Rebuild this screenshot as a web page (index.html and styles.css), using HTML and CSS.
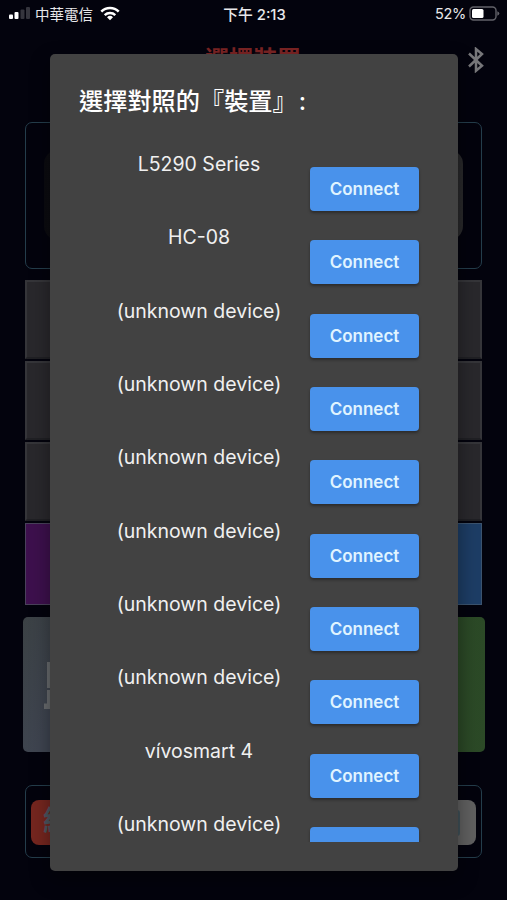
FILE: index.html
```html
<!DOCTYPE html>
<html lang="zh-Hant">

<head>
    <meta charset="UTF-8">
    <meta name="viewport" content="width=device-width, initial-scale=1.0">
    <title>選擇裝置</title>
    <link rel="stylesheet" href="styles.css">
</head>

<body>
    <!-- Status bar -->
    <div class="status-bar">
        <div class="carrier">
            <svg class="signal" width="22" height="14" viewBox="0 0 22 14">
                <rect x="0" y="8.5" width="4" height="4.5" rx="1" fill="#fff"/>
                <rect x="5.5" y="6" width="4" height="7" rx="1" fill="#fff"/>
                <rect x="11.5" y="3.5" width="4" height="9.5" rx="1" fill="#35353d"/>
                <rect x="17" y="1" width="4" height="12" rx="1" fill="#35353d"/>
            </svg>
            <span class="carrier-name">中華電信</span>
            <svg class="wifi" width="20" height="15" viewBox="0 0 20 15">
                <path d="M1.3 5.6a12.4 12.4 0 0 1 17.4 0" fill="none" stroke="#fff" stroke-width="2.6"/>
                <path d="M4.7 9.2a7.6 7.6 0 0 1 10.6 0" fill="none" stroke="#fff" stroke-width="2.4"/>
                <path d="M10 14.3l-3-3a4.3 4.3 0 0 1 6 0z" fill="#fff"/>
            </svg>
        </div>
        <div class="clock">下午 2:13</div>
        <div class="battery">
            <span>52%</span>
            <svg width="31" height="15" viewBox="0 0 31 15">
                <rect x="1" y="1" width="26" height="13" rx="3.5" fill="none" stroke="#63636a" stroke-width="1.4"/>
                <rect x="3" y="3" width="11.5" height="9" rx="1.5" fill="#fff"/>
                <path d="M28.3 5.2q2 .8 2 2.3t-2 2.3z" fill="#63636a"/>
            </svg>
        </div>
    </div>

    <!-- Page under the dialog -->
    <div class="page">
        <div class="header">
            <h1>選擇裝置</h1>
            <svg class="bluetooth" width="18" height="26" viewBox="0 0 18 26">
                <path d="M2 6.5l13 12.3-6 5V2l6 5L2 19.5" fill="none" stroke="#77777a" stroke-width="2.5"/>
            </svg>
        </div>
        <div class="card display-card">
            <div class="display"></div>
        </div>
        <div class="grid">
            <div class="grid-row"></div>
            <div class="grid-row"></div>
            <div class="grid-row"></div>
            <div class="grid-row color-row">
                <div class="purple"></div>
                <div class="blue"></div>
            </div>
        </div>
        <div class="big-buttons">
            <div class="gray-button">
                <svg width="10" height="48" viewBox="0 0 10 48">
                    <path d="M4.5 1v26M4.5 29v17.5H1.5v-4" fill="none" stroke="#696c6f" stroke-width="3"/>
                </svg>
            </div>
            <div class="green-button"></div>
        </div>
        <div class="card footer-card">
            <div class="red-button">結束</div>
            <div class="white-button"><span></span></div>
        </div>
    </div>

    <!-- Device dialog -->
    <div class="dialog">
        <h2>選擇對照的『裝置』<span>:</span></h2>
        <div class="device-list">
            <div class="device"><span>L5290 Series</span><button>Connect</button></div>
            <div class="device"><span>HC-08</span><button>Connect</button></div>
            <div class="device"><span>(unknown device)</span><button>Connect</button></div>
            <div class="device"><span>(unknown device)</span><button>Connect</button></div>
            <div class="device"><span>(unknown device)</span><button>Connect</button></div>
            <div class="device"><span>(unknown device)</span><button>Connect</button></div>
            <div class="device"><span>(unknown device)</span><button>Connect</button></div>
            <div class="device"><span>(unknown device)</span><button>Connect</button></div>
            <div class="device"><span>vívosmart 4</span><button>Connect</button></div>
            <div class="device"><span>(unknown device)</span><button></button></div>
        </div>
    </div>
</body>

</html>
```
FILE: styles.css
```css
* {
    box-sizing: border-box;
}

body {
    margin: 0;
    width: 507px;
    height: 900px;
    overflow: hidden;
    position: relative;
    background-color: #03030d;
    color: #fff;
    font-family: Inter, "Noto Sans CJK TC", sans-serif;
}

.status-bar {
    display: grid;
    grid-template-columns: 1fr auto 1fr;
    align-items: center;
    height: 28px;
    padding: 0 7px 2px 9px;
    font-size: 14.5px;
    color: #e8e8ea;
}

.carrier,
.battery {
    display: flex;
    align-items: center;
}

.carrier-name {
    margin: 0 7px 0 4px;
}

.clock {
    font-weight: 500;
    font-size: 14.8px;
}

.battery {
    justify-content: flex-end;
    gap: 3px;
}

.battery span {
    letter-spacing: -0.3px;
}

.page {
    padding: 0 25px;
}

.header {
    display: flex;
    height: 94px;
    padding: 15px 0 0 180px;
}

.header h1 {
    width: 97px;
    margin: 0;
    font-size: 24px;
    line-height: 34px;
    white-space: nowrap;
    color: #7c2424;
}

.bluetooth {
    flex: none;
    margin: 4px 0 0 166px;
}

.card {
    border: 1.5px solid #243d4b;
    border-radius: 7px;
}

.display-card {
    height: 147px;
    padding: 27px 18px;
}

.display {
    height: 90px;
    border-radius: 14px;
    background: linear-gradient(90deg, #0b0b10, #29292b);
}

.grid {
    margin-top: 11px;
}

.grid-row {
    height: 79px;
    margin-bottom: 2px;
    background-color: #29282c;
    border: 2px solid #353539;
    border-bottom-color: #202024;
}

.color-row {
    display: flex;
    height: 82px;
    margin-bottom: 0;
    border: none;
}

.purple,
.blue {
    flex: 1;
    border: 1px solid #49415a;
    background-color: #3d104d;
}

.blue {
    border-color: #3b536e;
    background-color: #1d3d65;
}

.big-buttons {
    display: flex;
    height: 135px;
    margin: 12px -3px 33px -2px;
}

.gray-button {
    flex: 1;
    padding: 44px 0 0 21px;
    border-radius: 5px;
    background: linear-gradient(110deg, #3b4144, #3f4551 60px);
}

.green-button {
    flex: 1;
    border-radius: 5px;
    background: linear-gradient(90deg, #20391d, #2c4a27);
}

.footer-card {
    display: flex;
    justify-content: space-between;
    height: 73px;
    padding: 14px 5px;
}

.red-button,
.white-button {
    width: 120px;
    height: 45px;
    border-radius: 8px;
    background-color: #75261f;
}

.red-button {
    padding-left: 12px;
    font-size: 28px;
    font-weight: bold;
    line-height: 43px;
    color: #4c5660;
}

.white-button {
    padding: 10px 16px;
    background-color: #606060;
}

.white-button span {
    display: block;
    height: 26px;
    border-right: 2px solid #405158;
    border-radius: 3px;
}

.dialog {
    position: absolute;
    top: 54px;
    left: 50px;
    width: 408px;
    height: 817px;
    padding: 31px 30px 29px 29px;
    border-radius: 5px;
    background-color: #424242;
    box-shadow: 0 8px 20px rgba(0, 0, 0, 0.4);
}

.dialog h2 {
    margin: 0 0 33px;
    font-size: 24.2px;
    line-height: 34px;
    font-weight: 500;
    white-space: nowrap;
}

.dialog h2 span {
    margin-left: 2px;
}

.device-list {
    height: 690px;
    overflow: hidden;
}

.device {
    display: flex;
    height: 73.33px;
}

.device span {
    width: 240px;
    text-align: center;
    font-size: 19.5px;
    line-height: 24px;
    color: #f0f0f0;
}

.device button {
    width: 109px;
    height: 44px;
    margin: 15px 0 0 -9px;
    padding: 0;
    border: none;
    border-radius: 4px;
    background-color: #4992eb;
    box-shadow: 0 2px 3px rgba(0, 0, 0, 0.35);
    color: #e0f4ff;
    font-family: Inter, sans-serif;
    font-size: 17px;
    font-weight: 600;
}
```
